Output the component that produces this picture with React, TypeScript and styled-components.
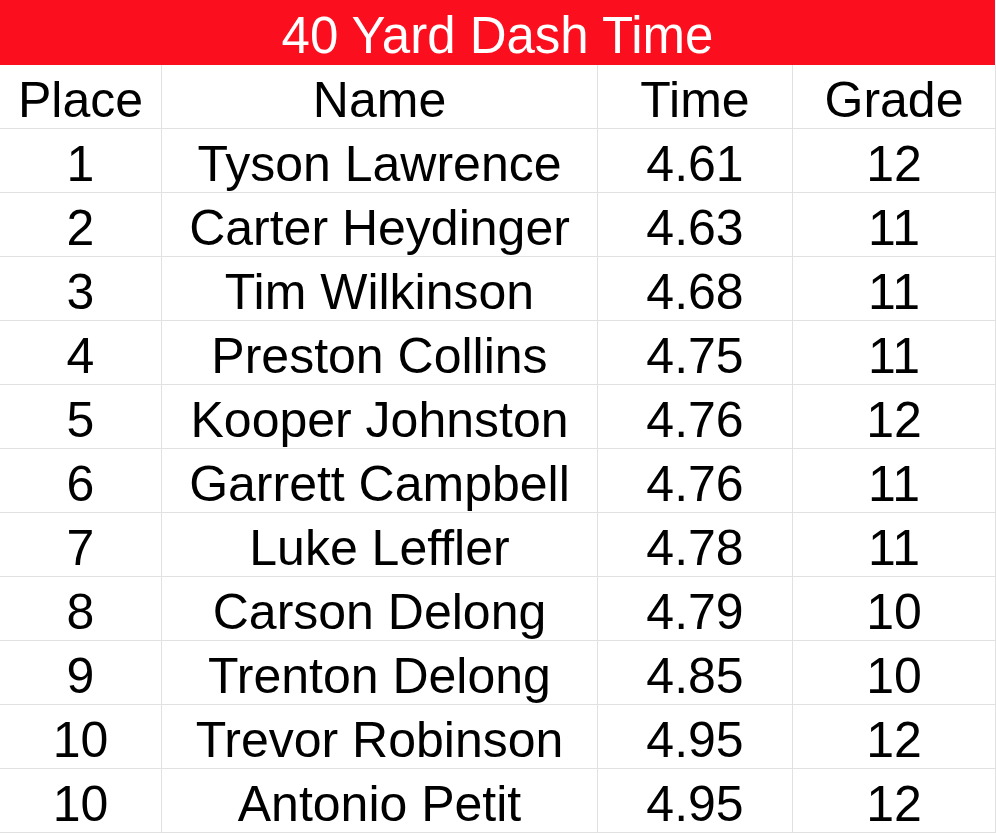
import React from "react";
import styled, { createGlobalStyle } from "styled-components";

const GlobalStyle = createGlobalStyle`
  html, body {
    margin: 0;
    padding: 0;
    background: #ffffff;
  }
  body {
    font-family: "Liberation Sans", Arial, sans-serif;
  }
`;

const Sheet = styled.div`
  width: 996px;
  display: grid;
  grid-template-columns: 162px 436px 195px 203px;
  grid-template-rows: 65px;
  grid-auto-rows: 64px;
  font-family: "Liberation Sans", Arial, sans-serif;
  color: #000000;
`;

const Title = styled.div`
  grid-column: 1 / -1;
  height: 65px;
  box-sizing: border-box;
  background: #fb0e1e;
  color: #ffffff;
  font-size: 51px;
  line-height: 51px;
  display: flex;
  align-items: center;
  justify-content: center;
  padding-top: 5px;
  margin-right: 1px;
`;

const Cell = styled.div`
  box-sizing: border-box;
  height: 64px;
  border-right: 1px solid #e1e1e1;
  border-bottom: 1px solid #e1e1e1;
  font-size: 50px;
  line-height: 50px;
  display: flex;
  align-items: center;
  justify-content: center;
  padding-top: 6px;
  white-space: nowrap;
`;

type Row = [string, string, string, string];

const rows: Row[] = [
  ["1", "Tyson Lawrence", "4.61", "12"],
  ["2", "Carter Heydinger", "4.63", "11"],
  ["3", "Tim Wilkinson", "4.68", "11"],
  ["4", "Preston Collins", "4.75", "11"],
  ["5", "Kooper Johnston", "4.76", "12"],
  ["6", "Garrett Campbell", "4.76", "11"],
  ["7", "Luke Leffler", "4.78", "11"],
  ["8", "Carson Delong", "4.79", "10"],
  ["9", "Trenton Delong", "4.85", "10"],
  ["10", "Trevor Robinson", "4.95", "12"],
  ["10", "Antonio Petit", "4.95", "12"],
];

const header: Row = ["Place", "Name", "Time", "Grade"];

export default function App() {
  return (
    <>
      <GlobalStyle />
      <Sheet>
        <Title>40 Yard Dash Time</Title>
        {[header, ...rows].map((r, i) =>
          r.map((v, j) => <Cell key={`${i}-${j}`}>{v}</Cell>)
        )}
      </Sheet>
    </>
  );
}
